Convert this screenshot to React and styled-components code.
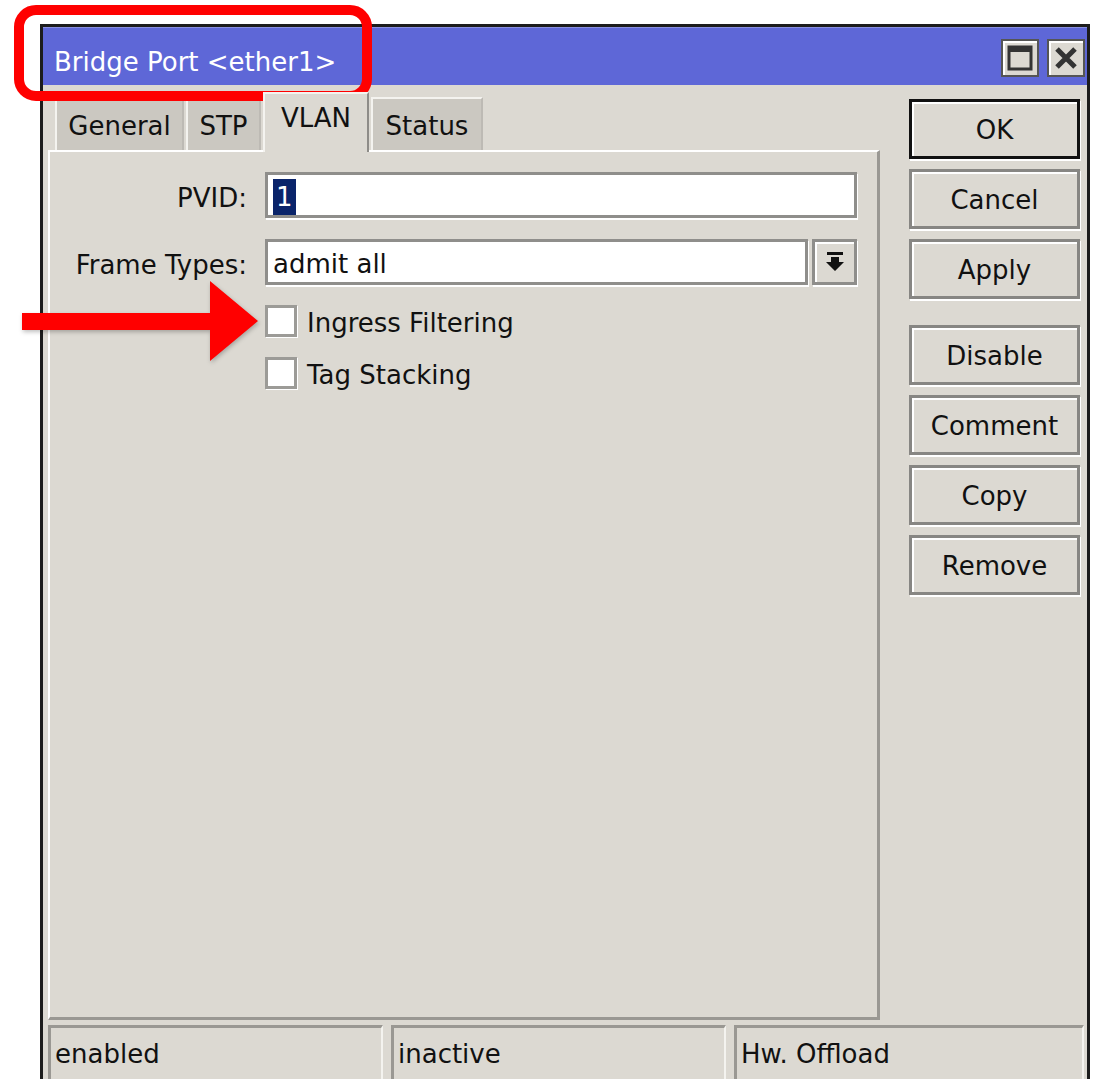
import React from 'react';
import styled, { createGlobalStyle } from 'styled-components';

const GlobalStyle = createGlobalStyle`
  html, body {
    margin: 0;
    padding: 0;
    background: #ffffff;
    overflow: hidden;
  }
  body {
    font-family: 'DejaVu Sans', 'Liberation Sans', sans-serif;
    font-size: 26px;
    color: #111;
  }
`;

const tabs = [
  { label: 'General', width: 129 },
  { label: 'STP', width: 75 },
  { label: 'VLAN', width: 106, active: true },
  { label: 'Status', width: 112 },
];
const actions = [
  { label: 'OK', primary: true },
  { label: 'Cancel' },
  { label: 'Apply' },
  { label: 'Disable', spaced: true },
  { label: 'Comment' },
  { label: 'Copy' },
  { label: 'Remove' },
];
const statusCells = [
  { text: 'enabled', width: 335 },
  { text: 'inactive', width: 335 },
  { text: 'Hw. Offload', width: 350 },
];

const App = () => {
  return (
    <Page>
      <GlobalStyle />
      <Window>
        <TitleBar>
          <Title>Bridge Port &lt;ether1&gt;</Title>
          <TitleControls>
            <TitleButton aria-label="maximize">
              <svg width="26" height="26" viewBox="0 0 26 26">
                <rect x="2" y="2" width="22" height="22" fill="none" stroke="#333" strokeWidth="3" />
                <rect x="2" y="2" width="22" height="5" fill="#333" />
              </svg>
            </TitleButton>
            <TitleButton aria-label="close">
              <svg width="24" height="22" viewBox="0 0 24 22">
                <path d="M3 2 L21 20 M21 2 L3 20" stroke="#333" strokeWidth="5" />
              </svg>
            </TitleButton>
          </TitleControls>
        </TitleBar>

        <Body>
          <Main>
            <TabRow>
              {tabs.map((t) => (
                <Tab key={t.label} active={t.active} $w={t.width}>{t.label}</Tab>
              ))}
            </TabRow>
            <Panel>
              <FormGrid>
                <Label>PVID:</Label>
                <Field>
                  <TextBox>
                    <Selected>1</Selected>
                  </TextBox>
                </Field>

                <Label>Frame Types:</Label>
                <Field>
                  <TextBox>admit all</TextBox>
                  <DropButton aria-label="open list">
                    <svg width="20" height="22" viewBox="0 0 20 22">
                      <rect x="2" y="1" width="16" height="3" fill="#111" />
                      <path d="M6 6 H14 V11 H19 L10 20 L1 11 H6 Z" fill="#111" />
                    </svg>
                  </DropButton>
                </Field>

                <span />
                <CheckRow>
                  <CheckBox />
                  <CheckText>Ingress Filtering</CheckText>
                </CheckRow>

                <span />
                <CheckRow>
                  <CheckBox />
                  <CheckText>Tag Stacking</CheckText>
                </CheckRow>
              </FormGrid>
            </Panel>
          </Main>

          <ButtonColumn>
            {actions.map((a) => (
              <ActionButton key={a.label} primary={a.primary} spaced={a.spaced}>
                {a.label}
              </ActionButton>
            ))}
          </ButtonColumn>
        </Body>

        <StatusBar>
          {statusCells.map((c) => (
            <StatusCell key={c.text} style={{ width: c.width }}>{c.text}</StatusCell>
          ))}
        </StatusBar>
      </Window>

      {/* callouts drawn over the dialog */}
      <TitleMarker />
      <Arrow width="270" height="100" viewBox="0 0 270 100">
        <polygon
          points="2,34 190,34 190,2 238,42 190,82 190,51 2,51"
          fill="#ff0000"
        />
      </Arrow>
    </Page>
  );
};

const Page = styled.div`
  position: relative;
  width: 1104px;
  height: 1079px;
  padding: 24px 0 0 40px;
  box-sizing: border-box;
`;

const Window = styled.div`
  width: 1050px;
  height: 1080px;
  box-sizing: border-box;
  border: 3px solid #1c1c1c;
  background: #dcd9d2;
  display: flex;
  flex-direction: column;
`;

const TitleBar = styled.div`
  height: 58px;
  background: #5e67d7;
  border-top: 1px solid #8a90e0;
  box-sizing: border-box;
  display: flex;
  align-items: center;
  justify-content: space-between;
  padding: 0 2px 0 11px;
`;

const Title = styled.span`
  color: #ffffff;
  padding-top: 10px;
`;

const TitleControls = styled.div`
  display: flex;
  gap: 8px;
  padding-top: 2px;
`;

const TitleButton = styled.div`
  width: 38px;
  height: 38px;
  box-sizing: border-box;
  background: #dcd9d2;
  border: 2px solid #555;
  box-shadow: inset 2px 2px 0 #fff;
  display: flex;
  align-items: center;
  justify-content: center;
`;

const Body = styled.div`
  display: flex;
  padding: 0 7px 0 5px;
  gap: 29px;
`;

const Main = styled.div`
  width: 832px;
  display: flex;
  flex-direction: column;
  padding-top: 7px;
`;

const TabRow = styled.div`
  display: flex;
  align-items: flex-end;
  height: 58px;
  padding-left: 7px;
`;

const Tab = styled.div`
  box-sizing: border-box;
  width: ${(p) => p.$w}px;
  height: ${(p) => (p.active ? '60px' : '53px')};
  margin-bottom: ${(p) => (p.active ? '-2px' : '0')};
  padding-bottom: ${(p) => (p.active ? '10px' : '0')};
  padding-top: ${(p) => (p.active ? '0' : '2px')};
  margin-right: 2px;
  display: flex;
  align-items: center;
  justify-content: center;
  background: ${(p) => (p.active ? '#dcd9d2' : '#cbc8c1')};
  border-top: 2px solid #f4f3ef;
  border-left: 2px solid #f4f3ef;
  border-right: 2px solid ${(p) => (p.active ? '#8e8c88' : '#bdbab4')};
  position: relative;
  z-index: ${(p) => (p.active ? 1 : 0)};
`;

const Panel = styled.div`
  height: 870px;
  box-sizing: border-box;
  border-top: 2px solid #ffffff;
  border-left: 2px solid #ffffff;
  border-right: 3px solid #9a9893;
  border-bottom: 3px solid #9a9893;
  padding: 20px 20px 0 0;
`;

const FormGrid = styled.div`
  display: grid;
  grid-template-columns: 215px 1fr;
  row-gap: 21px;
  align-items: center;
`;

const Label = styled.div`
  text-align: right;
  padding: 5px 18px 0 0;
`;

const Field = styled.div`
  display: flex;
  gap: 4px;
  height: 46px;
`;

const TextBox = styled.div`
  flex: 1;
  box-sizing: border-box;
  background: #ffffff;
  border: 3px solid #8f8e8b;
  box-shadow: 1px 2px 0 #ffffff;
  display: flex;
  align-items: center;
  padding: 4px 0 0 5px;
`;

const Selected = styled.span`
  background: #0a246a;
  color: #ffffff;
  padding: 0 3px;
  line-height: 36px;
`;

const DropButton = styled.div`
  width: 45px;
  box-sizing: border-box;
  border: 3px solid #8f8e8b;
  box-shadow: inset 2px 2px 0 #fff, 1px 2px 0 #fff;
  display: flex;
  align-items: center;
  justify-content: center;
`;

const CheckRow = styled.div`
  display: flex;
  align-items: center;
  gap: 10px;
  height: 32px;
  margin-top: -1px;
`;

const CheckText = styled.span`
  padding-top: 4px;
`;

const CheckBox = styled.div`
  width: 32px;
  height: 32px;
  box-sizing: border-box;
  background: #ffffff;
  border: 3px solid #9c9b97;
  box-shadow: 1px 1px 0 #fff;
`;

const ButtonColumn = styled.div`
  width: 171px;
  display: flex;
  flex-direction: column;
  gap: 10px;
  padding-top: 14px;
`;

const ActionButton = styled.div`
  height: 60px;
  box-sizing: border-box;
  margin-top: ${(p) => (p.spaced ? '16px' : '0')};
  padding-top: 2px;
  display: flex;
  align-items: center;
  justify-content: center;
  background: #dcd9d2;
  border: 3px solid ${(p) => (p.primary ? '#111' : '#878683')};
  box-shadow: inset 2px 2px 0 #ffffff, 1px 2px 0 #ffffff;
`;

const StatusBar = styled.div`
  display: flex;
  gap: 8px;
  padding: 5px 0 0 5px;
  height: 60px;
`;

const StatusCell = styled.div`
  height: 58px;
  box-sizing: border-box;
  border-top: 3px solid #9a9893;
  border-left: 3px solid #9a9893;
  border-right: 2px solid #f4f3ef;
  padding: 0 0 4px 4px;
  display: flex;
  align-items: center;
`;

const TitleMarker = styled.div`
  position: absolute;
  left: 14px;
  top: 5px;
  width: 358px;
  height: 96px;
  box-sizing: border-box;
  border: 10px solid #ff0000;
  border-radius: 22px;
  pointer-events: none;
`;

const Arrow = styled.svg`
  position: absolute;
  left: 20px;
  top: 279px;
  pointer-events: none;
  filter: drop-shadow(1px 2px 2px rgba(0, 0, 0, 0.25));
`;

export default App;
